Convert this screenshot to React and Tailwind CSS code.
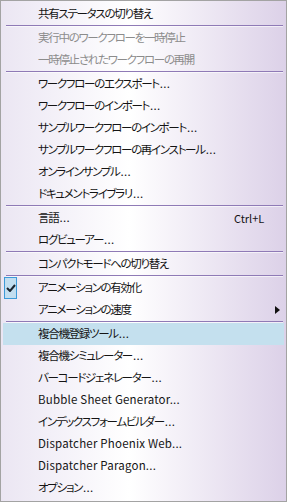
import React from "react";

const items = [
  { label: "共有ステータスの切り替え" },
  { sep: true },
  { label: "実行中のワークフローを一時停止", disabled: true },
  { label: "一時停止されたワークフローの再開", disabled: true },
  { sep: true },
  { label: "ワークフローのエクスポート..." },
  { label: "ワークフローのインポート..." },
  { label: "サンプルワークフローのインポート..." },
  { label: "サンプルワークフローの再インストール..." },
  { label: "オンラインサンプル..." },
  { label: "ドキュメントライブラリ..." },
  { sep: true },
  { label: "言語...", shortcut: "Ctrl+L" },
  { label: "ログビューアー..." },
  { sep: true },
  { label: "コンパクトモードへの切り替え" },
  { sep: true },
  { label: "アニメーションの有効化", checked: true },
  { label: "アニメーションの速度", submenu: true },
  { sep: true },
  { label: "複合機登録ツール...", active: true },
  { label: "複合機シミュレーター..." },
  { label: "バーコードジェネレーター..." },
  { label: "Bubble Sheet Generator...", latin: true },
  { label: "インデックスフォームビルダー..." },
  { label: "Dispatcher Phoenix Web...", latin: true },
  { label: "Dispatcher Paragon...", latin: true },
  { label: "オプション..." },
];

function Label({ item }) {
  if (item.latin) {
    return <span className="tracking-[0.2px]">{item.label}</span>;
  }
  const dots = item.label.endsWith("...");
  const text = dots ? item.label.slice(0, -3) : item.label;
  return (
    <>
      <span className="tracking-[-1.3px]">{text}</span>
      {dots && <span className="pl-[1px] tracking-[0.3px]">...</span>}
    </>
  );
}

function Row({ item }) {
  return (
    <div
      className={`relative flex h-[22px] items-center text-[11.5px] ${
        item.active ? "bg-[#c4e0ee]" : ""
      }`}
    >
      {item.checked && (
        <div className="absolute left-[1px] top-0 flex h-[22px] w-[13px] items-center justify-center border border-[#3d9ad8] bg-[#c2def0]">
          <svg width="10" height="8" viewBox="0 0 10 8">
            <path d="M1 4 L4 7 L9 1" fill="none" stroke="#1c2530" strokeWidth="2" />
          </svg>
        </div>
      )}
      <div className={`pl-[35px] ${item.disabled ? "text-[#8c8c8c]" : "text-[#141414]"}`}>
        <Label item={item} />
      </div>
      {item.shortcut && (
        <span className="absolute left-[231px] text-[11px] tracking-normal text-[#141414]">
          {item.shortcut}
        </span>
      )}
      {item.submenu && (
        <svg className="absolute left-[272px]" width="5" height="8" viewBox="0 0 5 8">
          <path d="M0 0 L5 4 L0 8 Z" fill="#111" />
        </svg>
      )}
    </div>
  );
}

export default function App() {
  return (
    <div className="h-[502px] w-[287px] border border-[#a3a3a3] bg-white">
      <div className="flex h-full flex-col bg-gradient-to-r from-[#ebe6f3] via-white via-45% to-[#dcd1e8] pt-[2px] px-[2px] leading-none [font-family:'Noto_Sans_CJK_JP',sans-serif] [font-feature-settings:'palt']">
        {items.map((item, i) =>
          item.sep ? (
            <div key={i} className="flex h-[2px] flex-col pl-[3px] pr-[1px]">
              <div className="h-[1px] bg-[#8f7ab6]" />
              <div className="h-[1px] bg-white/60" />
            </div>
          ) : (
            <Row key={i} item={item} />
          )
        )}
      </div>
    </div>
  );
}
